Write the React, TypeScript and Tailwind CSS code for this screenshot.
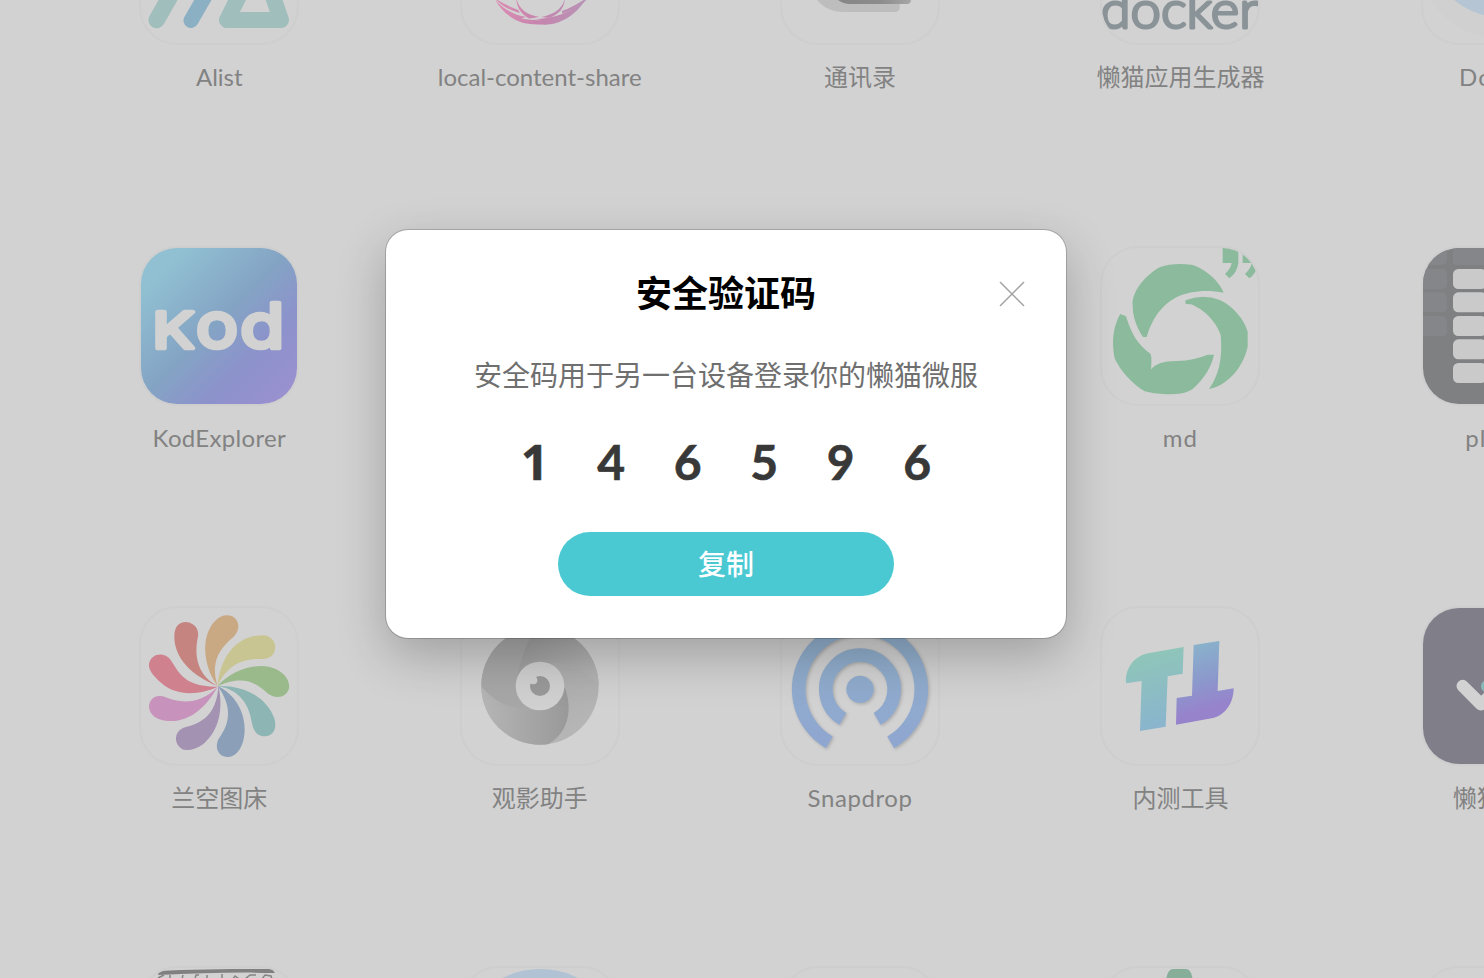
import type { ReactNode } from "react";

function Art({ box, children }: { box: string; children?: ReactNode }) {
  return (
    <svg viewBox={box} className="absolute -top-0.5 -left-0.5 size-40">
      {children}
    </svg>
  );
}

const alist = (
  <Art box="139 -115 160 160">
    <g fill="none" strokeLinecap="round" strokeLinejoin="round">
      <path d="M156.7 20 L180 -21" stroke="#a0bebb" strokeWidth="16.5" />
      <path d="M191 20.5 L215 -21" stroke="#8bafc3" strokeWidth="15" />
      <path d="M227 20 L281 20 L264 -30 L252 -30 Z" stroke="#a0bebb" strokeWidth="16" />
    </g>
  </Art>
);

const share = (
  <Art box="459.7 -115 160 160">
    <defs>
      <linearGradient id="share" x1="495" x2="585" y1="0" y2="0" gradientUnits="userSpaceOnUse">
        <stop offset="0" stopColor="#dc8cb2" />
        <stop offset="0.5" stopColor="#c585ae" />
        <stop offset="1" stopColor="#b893b5" />
      </linearGradient>
    </defs>
    <g fill="url(#share)">
      <path d="M495 0 C503 9 514 15 526 17 L521 18.500 C529 20 537 20.500 545 20 L552 22.500 C544 25 532 25 523 23 C511 19 501 11 495 0 Z" />
      <path d="M493 -3 C501 3 510 7 518 10 L519.500 13 C509 10.500 500 5 493 -3 Z" />
      <path d="M516 -2 C518 8 526 15 539 17 L529 18.500 C521 14.500 516 7 516 -2 Z" />
      <path d="M564.500 -2 C563 8 554 14.500 541 17 L549 18 C559.500 14 564.500 7 564.500 -2 Z" />
      <path d="M587 -3 C580 3 570 8 561.500 11 L562 13.500 C571 11 580 6 586 0 Z" />
      <path d="M585 0 C573 11 558 16.500 546 18 C538 19.500 531 19 526 18 L541 20 C537 22 533 23 530 23 L541 24.500 C558 26 575 16 585 0 Z" />
    </g>
  </Art>
);

const contacts = (
  <Art box="780.1 -115 160 160">
    <defs>
      <linearGradient id="contacts" x1="839" x2="911" y1="0" y2="0" gradientUnits="userSpaceOnUse">
        <stop offset="0" stopColor="#858585" />
        <stop offset="0.6" stopColor="#8d8d8d" />
        <stop offset="1" stopColor="#a6a6a6" />
      </linearGradient>
    </defs>
    <path d="M813 -6 C820 6 830 12 844 12 L895 12 Q900 12 900 6 L896 -6 Z" fill="#bdbdbd" />
    <path d="M832 -6 Q840 4 850 4 L907 4 Q911 4 911 0 L911 -6 Z" fill="url(#contacts)" />
  </Art>
);

const docker = (
  <Art box="1100.5 -115 160 160">
    <text x="1101" y="28.300" textLength="158" lengthAdjust="spacingAndGlyphs" fontSize="52" fill="#8a9397" stroke="#8a9397" strokeWidth="3" strokeLinejoin="round" className="font-['Lato',sans-serif] font-light">
      docker
    </text>
  </Art>
);

const cloud = (
  <Art box="1420.9 -115 160 160">
    <circle cx="1501" cy="-45.700" r="84" fill="#d0d0d0" />
    <circle cx="1501" cy="-56.500" r="73.500" fill="#b5c5d3" />
  </Art>
);

const kod = (
  <Art box="57 48 480 480">
    <defs>
      <linearGradient id="kod" x1="0" y1="0" x2="1" y2="1">
        <stop offset="0.15" stopColor="#90c0d2" />
        <stop offset="0.48" stopColor="#84a4c4" />
        <stop offset="0.7" stopColor="#8c92cb" />
        <stop offset="0.95" stopColor="#9b90d0" />
      </linearGradient>
    </defs>
    <rect x="57" y="48" width="480" height="480" fill="url(#kod)" />
    <g fill="#d2d2d2" stroke="#d2d2d2" strokeLinejoin="round" className="font-['Inter',sans-serif]">
      <text x="98" y="355" fontSize="148" strokeWidth="14" textLength="124" lengthAdjust="spacingAndGlyphs">K</text>
      <text x="228" y="353" fontSize="190" strokeWidth="14" textLength="126" lengthAdjust="spacingAndGlyphs">o</text>
      <text x="361" y="353" fontSize="186" strokeWidth="14" textLength="132" lengthAdjust="spacingAndGlyphs">d</text>
    </g>
  </Art>
);

const md = (
  <Art box="31 48 480 480">
    <g fill="#8cba9c">
      <path d="M402 188 C388 150 340 112 305 104 C270 100 240 101 210 112 C160 140 126 190 129 225 C129 260 140 290 160 321 L171 321 C185 270 215 225 260 202 C300 183 350 178 402 188 Z" />
      <path d="M287 211 Q340 190 390 210 C430 228 465 270 474 305 L474 350 C460 415 410 468 358 477 C385 440 400 390 393 315 C380 275 340 235 303 223 L288 222 Z" />
      <path d="M92 252 L109 259 C125 310 140 340 183 372 Q187 385 184 418 C200 400 220 394 260 393 C300 392 330 383 355 374 L373 374 C365 410 345 445 310 476 C290 490 270 492 230 493 Q190 491 165 484 C130 465 90 420 75 385 C68 350 68 310 80 278 Q85 262 92 252 Z" />
      <path d="M399 54 L446 54 L446 98 Q443 127 419 145 L406 132 Q424 115 426 99 L399 99 Z" />
      <path d="M459 54 L506 54 L506 98 Q503 127 479 145 L466 132 Q484 115 486 99 L459 99 Z" />
    </g>
  </Art>
);

const keys = (
  <Art box="63 48 480 480">
    <rect x="63" y="48" width="480" height="480" fill="#7e8081" />
    <g fill="#84868a">
      <rect x="40" y="40" width="101" height="65" rx="15" />
      <rect x="159" y="30" width="101" height="75" rx="8" />
      <rect x="40" y="116" width="101" height="62" rx="15" />
      <rect x="40" y="187" width="101" height="60" rx="15" />
      <rect x="40" y="258" width="101" height="61" rx="15" />
    </g>
    <g fill="#cacaca">
      <rect x="159" y="117" width="101" height="60" rx="16" />
      <rect x="159" y="187" width="101" height="60" rx="16" />
      <rect x="159" y="258" width="101" height="60" rx="16" />
      <rect x="159" y="328" width="101" height="60" rx="16" />
      <rect x="159" y="399" width="101" height="60" rx="16" />
    </g>
  </Art>
);

const petals = (
  <Art box="57 48 480 480">
    <path fill="#c9a884" d="M293 288 C250 230 240 140 285 93 C300 76 320 72 337 79 C358 90 363 120 340 141 C300 175 270 215 293 288 Z" />
    <path fill="#c9c592" d="M293 288 C300 200 350 135 430 136 C477 138 478 205 430 207 C360 205 320 230 293 288 Z" />
    <path fill="#9aba8c" d="M293 288 C340 235 420 215 467 237 C498 252 510 275 507 295 C500 325 465 328 442 310 C405 276 370 255 293 288 Z" />
    <path fill="#8cb5b4" d="M293 288 C370 285 440 320 463 385 C470 410 465 435 437 439 C410 440 400 420 396 400 C388 350 365 300 293 288 Z" />
    <path fill="#8ba0b8" d="M293 288 C340 310 375 360 374 420 C373 470 350 502 322 501 C290 500 284 465 297 445 C330 400 338 350 293 288 Z" />
    <path fill="#a492b2" d="M295 288 C310 350 300 420 250 462 C225 480 200 485 185 476 C160 460 162 422 195 412 C240 400 290 380 295 288 Z" />
    <path fill="#c792bb" d="M293 290 C260 350 210 395 150 393 C110 392 87 375 87 348 C90 320 115 312 138 322 C180 340 240 345 293 290 Z" />
    <path fill="#cf818e" d="M293 290 C240 315 170 320 125 280 C100 258 85 240 87 222 C92 190 130 185 148 205 C175 240 185 292 293 290 Z" />
    <path fill="#c58480" d="M293 288 C220 260 160 205 163 135 C165 110 175 97 198 96 C225 98 238 120 234 140 C225 180 222 250 293 288 Z" />
  </Art>
);

const eye = (
  <Art box="60 48 480 480">
    <defs>
      <clipPath id="eye-clip">
        <circle cx="300" cy="288" r="176" />
      </clipPath>
      <linearGradient id="eye-low" x1="0" x2="1" y1="0" y2="0">
        <stop offset="0" stopColor="#b6b6b6" />
        <stop offset="1" stopColor="#999999" />
      </linearGradient>
      <linearGradient id="eye-right" x1="0" x2="0.5" y1="0" y2="1">
        <stop offset="0" stopColor="#a2a2a2" />
        <stop offset="1" stopColor="#b5b5b5" />
      </linearGradient>
      <linearGradient id="eye-top" x1="0" x2="1" y1="0" y2="0.6">
        <stop offset="0" stopColor="#999999" />
        <stop offset="1" stopColor="#b3b3b3" />
      </linearGradient>
    </defs>
    <g clipPath="url(#eye-clip)">
      <rect x="120" y="100" width="360" height="370" fill="url(#eye-right)" />
      <path d="M300 100 H490 V300 C450 250 400 220 335 218 L230 260 C245 200 260 150 300 100 Z" fill="url(#eye-top)" />
      <path d="M115 100 H300 C260 150 235 205 232 260 L275 360 C215 360 165 340 124 288 Z" fill="#a7a7a7" />
      <path d="M118 280 C155 335 215 360 280 360 L374 292 C397 350 390 425 325 463 L300 480 H118 Z" fill="url(#eye-low)" />
    </g>
    <circle cx="300" cy="288" r="73" fill="#d0d0d0" />
    <circle cx="300" cy="288" r="30" fill="#999999" />
    <circle cx="280" cy="271" r="12" fill="#d0d0d0" />
  </Art>
);

const snapdrop = (
  <Art box="60 48 480 480">
    <defs>
      <linearGradient id="snap" x1="0" x2="0" y1="94" y2="475" gradientUnits="userSpaceOnUse">
        <stop offset="0" stopColor="#92b1cc" />
        <stop offset="1" stopColor="#8fa6d0" />
      </linearGradient>
    </defs>
    <g fill="none" stroke="url(#snap)" strokeWidth="41" className="drop-shadow-[4px_4px_4px_rgba(0,0,0,0.18)]">
      <circle cx="300" cy="298" r="41" fill="url(#snap)" stroke="none" />
      <path d="M248.800 386.800 A102.500 102.500 0 1 1 351.200 386.800" />
      <path d="M208 457.300 A184 184 0 1 1 392 457.300" />
    </g>
  </Art>
);

const tools = (
  <Art box="31 48 480 480">
    <defs>
      <linearGradient id="tool-t" x1="0" x2="0.2" y1="0" y2="1">
        <stop offset="0.15" stopColor="#8fc5b9" />
        <stop offset="1" stopColor="#8ab5cd" />
      </linearGradient>
      <linearGradient id="tool-l" x1="0" x2="0.2" y1="0" y2="1">
        <stop offset="0" stopColor="#88b8cb" />
        <stop offset="0.55" stopColor="#8c98cc" />
        <stop offset="0.9" stopColor="#9782cc" />
      </linearGradient>
    </defs>
    <path d="M282 171 L279 251 L234 259 L228 410 L151 423 L156 273 L109 280 C105 235 135 195 180 189 Z" fill="url(#tool-t)" />
    <path d="M389 153 L384 303 L432 295 C432 340 405 378 366 385 L259 404 L261 324 L307 317 L312 165 Z" fill="url(#tool-l)" />
  </Art>
);

const check = (
  <Art box="63 48 480 480">
    <rect x="63" y="48" width="480" height="480" fill="#807e89" />
    <path d="M188 288 L243 343 L300 290" fill="none" stroke="#d2d2d2" strokeWidth="37" strokeLinecap="round" strokeLinejoin="round" />
    <circle cx="262" cy="289" r="19" fill="#87b9b9" />
  </Art>
);

const sketch = (
  <Art box="139 966 160 160">
    <path d="M159 971 C190 969 240 969 272 969 L275 973 C240 972 200 973 158 975 Z" fill="#808080" />
    <path d="M158 978 L164 975 M170 979 L170 975 M182 979 L183 975 M195 979 L196 975 L199 975 M207 979 V975 M222 979 V974 M233 979 L235 976 L239 979 M245 979 L250 975 L256 975 M262 979 L265 975 L271 976 L272 979" fill="none" stroke="#858585" strokeWidth="1.5" />
  </Art>
);

const orb = (
  <Art box="459.7 966 160 160">
    <circle cx="540" cy="1053" r="84" fill="#b0c2d3" />
  </Art>
);

const sprout = (
  <Art box="1100.5 966 160 160">
    <path d="M1166.500 986 C1166.500 974 1169 969 1174 969 H1186 C1191 969 1193.500 975 1193.500 986 Z" fill="#86ae98" />
  </Art>
);

type AppEntry = { name: string; icon?: ReactNode; tracking?: string };

const apps: AppEntry[] = [
  { name: "Alist", icon: alist },
  { name: "local-content-share", icon: share },
  { name: "通讯录", icon: contacts },
  { name: "懒猫应用生成器", icon: docker },
  { name: "Docker", icon: cloud, tracking: "tracking-[1.3px]" },
  { name: "KodExplorer", icon: kod, tracking: "tracking-[0.3px]" },
  { name: "" },
  { name: "" },
  { name: "md", icon: md, tracking: "tracking-[1px]" },
  { name: "player", icon: keys, tracking: "tracking-[1.2px]" },
  { name: "兰空图床", icon: petals },
  { name: "观影助手", icon: eye },
  { name: "Snapdrop", icon: snapdrop, tracking: "tracking-[0.6px]" },
  { name: "内测工具", icon: tools },
  { name: "懒猫清单", icon: check },
  { name: "", icon: sketch },
  { name: "", icon: orb },
  { name: "" },
  { name: "", icon: sprout },
  { name: "" },
];

function AppTile({ name, icon, tracking = "tracking-normal" }: AppEntry) {
  return (
    <div className="flex flex-col items-center">
      <div className="relative size-40 overflow-hidden rounded-[38px] border-2 border-[#cecece]">{icon}</div>
      <div className={`mt-3.5 text-2xl leading-9 whitespace-nowrap text-[#828282] ${tracking}`}>{name}</div>
    </div>
  );
}

function CodeDialog() {
  return (
    <section
      role="dialog"
      className="flex h-[408px] w-[680px] flex-col items-center rounded-[22px] bg-white shadow-[0_0_0_1px_rgba(0,0,0,0.18),0_18px_50px_rgba(0,0,0,0.24)]"
    >
      <header className="mt-9 grid h-[54px] w-full grid-cols-[1fr_auto_1fr] items-center pr-[41px]">
        <span />
        <h1 className="ml-[41px] text-4xl font-bold text-black">安全验证码</h1>
        <button aria-label="关闭" className="justify-self-end">
          <svg viewBox="0 0 26 26" className="mt-0.5 size-[26px]" stroke="#a3a3a3" strokeWidth="1.5">
            <path d="M1 1 L25 25 M25 1 L1 25" />
          </svg>
        </button>
      </header>
      <p className="mt-[35px] text-[28px] leading-10 text-[#6f6f6f]">安全码用于另一台设备登录你的懒猫微服</p>
      <div className="mt-[37px] grid grid-cols-[repeat(6,76.5px)] text-center text-5xl leading-[60px] font-bold text-[#383838] [-webkit-text-stroke:0.6px_#383838]">
        {["1", "4", "6", "5", "9", "6"].map((digit, i) => (
          <span key={i} className={digit === "1" ? "font-['Open_Sans',sans-serif]" : ""}>
            {digit}
          </span>
        ))}
      </div>
      <button className="mt-10 h-16 w-[336px] rounded-full bg-[#4ac9d3] text-[28px] leading-none font-medium text-white">复制</button>
    </section>
  );
}

export default function App() {
  return (
    <div className="relative h-[978px] w-[1484px] overflow-hidden bg-[#d2d2d2] font-['Lato','Noto_Sans_CJK_SC',sans-serif]">
      <main className="-mt-[115px] ml-[59.1px] grid w-[1602px] grid-cols-[repeat(5,320.4px)] grid-rows-[361px_360px_360px_360px]">
        {apps.map((app, i) => (
          <AppTile key={i} {...app} />
        ))}
      </main>
      <div className="absolute inset-0 flex items-start pt-[230px] pl-[386px]">
        <CodeDialog />
      </div>
    </div>
  );
}
